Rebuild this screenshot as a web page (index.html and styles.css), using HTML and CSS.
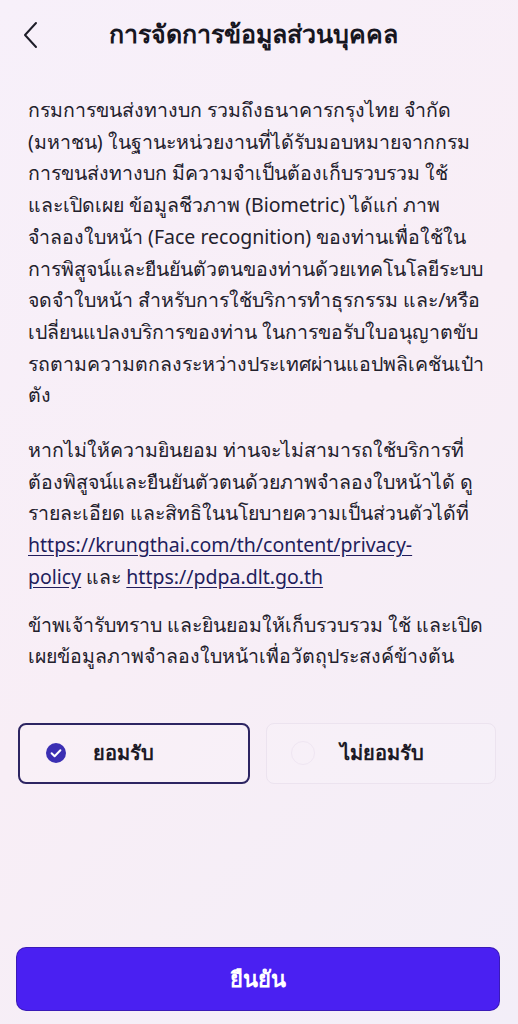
FILE: index.html
```html
<!DOCTYPE html>
<html lang="th">
<head>
<meta charset="utf-8">
<link rel="stylesheet" href="styles.css">
</head>
<body>
<div class="screen">
  <header class="header">
    <span class="back">
      <svg width="20" height="30" viewBox="0 0 20 30"><path d="M15 3 L4 15 L15 27" fill="none" stroke="#1d1d28" stroke-width="2" stroke-linecap="round" stroke-linejoin="round"/></svg>
    </span>
    <h1 class="title">การจัดการข้อมูลส่วนบุคคล</h1>
  </header>
  <main class="content">
    <p class="para p1">กรมการขนส่งทางบก รวมถึงธนาคารกรุงไทย จำกัด<br>(มหาชน) ในฐานะหน่วยงานที่ได้รับมอบหมายจากกรม<br>การขนส่งทางบก มีความจำเป็นต้องเก็บรวบรวม ใช้<br>และเปิดเผย ข้อมูลชีวภาพ (Biometric) ได้แก่ ภาพ<br>จำลองใบหน้า (Face recognition) ของท่านเพื่อใช้ใน<br>การพิสูจน์และยืนยันตัวตนของท่านด้วยเทคโนโลยีระบบ<br>จดจำใบหน้า สำหรับการใช้บริการทำธุรกรรม และ/หรือ<br>เปลี่ยนแปลงบริการของท่าน ในการขอรับใบอนุญาตขับ<br>รถตามความตกลงระหว่างประเทศผ่านแอปพลิเคชันเป๋า<br>ตัง</p>
    <p class="para p2">หากไม่ให้ความยินยอม ท่านจะไม่สามารถใช้บริการที่<br>ต้องพิสูจน์และยืนยันตัวตนด้วยภาพจำลองใบหน้าได้ ดู<br>รายละเอียด และสิทธิในนโยบายความเป็นส่วนตัวได้ที่<br><a class="link" href="#">https://krungthai.com/th/content/privacy-<br>policy</a> และ <a class="link" href="#">https://pdpa.dlt.go.th</a></p>
    <p class="para p3">ข้าพเจ้ารับทราบ และยินยอมให้เก็บรวบรวม ใช้ และเปิด<br>เผยข้อมูลภาพจำลองใบหน้าเพื่อวัตถุประสงค์ข้างต้น</p>
  </main>
  <div class="choices">
    <div class="choice selected">
      <span class="radio radio-on">
        <svg width="20" height="20" viewBox="0 0 20 20"><circle cx="10" cy="10" r="10" fill="#3b2fb3"/><path d="M5.6 10.3 L8.6 13.2 L14.4 7.2" fill="none" stroke="#fff" stroke-width="2" stroke-linecap="round" stroke-linejoin="round"/></svg>
      </span>
      <span class="choice-label">ยอมรับ</span>
    </div>
    <div class="choice">
      <span class="radio"><span class="radio-off"></span></span>
      <span class="choice-label">ไม่ยอมรับ</span>
    </div>
  </div>
  <div class="spacer"></div>
  <button class="confirm">ยืนยัน</button>
</div>
</body>
</html>
```

FILE: styles.css
```css
* { box-sizing: border-box; }
html, body {
  margin: 0;
  padding: 0;
  background: #f6eff8;
}
body {
  font-family: "Noto Sans", "DejaVu Sans", sans-serif;
  color: #1f1d28;
}
.screen {
  width: 518px;
  height: 1024px;
  display: flex;
  flex-direction: column;
  background: linear-gradient(135deg, #f7f0fa 0%, #f8eef6 50%, #f3eef8 100%);
}
.header {
  height: 68px;
  display: flex;
  align-items: center;
  position: relative;
  justify-content: center;
}
.back {
  position: absolute;
  left: 21px;
  top: 20px;
  display: flex;
}
.title {
  margin: 0;
  font-size: 25px;
  font-weight: 700;
  color: #17161f;
  transform: translateX(-6px);
}
.content {
  padding: 26px 0 0 28px;
}
.para {
  margin: 0;
  font-size: 19.5px;
  line-height: 31.7px;
  color: #23212c;
  white-space: nowrap;
}
.p1 { margin-bottom: 23px; }
.p2 { margin-bottom: 16px; }
.link {
  color: #221d5c;
  text-decoration: underline;
  text-underline-offset: 3px;
}
.choices {
  display: flex;
  gap: 16px;
  padding: 0 22px 0 18px;
  margin-top: 51px;
}
.choice {
  flex: 1;
  height: 61px;
  border-radius: 8px;
  border: 1.5px solid #ece3ef;
  display: flex;
  align-items: center;
  padding-left: 24px;
  background: rgba(255,255,255,0.15);
}
.choice.selected {
  border: 2px solid #2d2562;
}
.radio {
  width: 24px;
  height: 24px;
  display: flex;
  align-items: center;
  justify-content: center;
}
.radio-off {
  width: 24px;
  height: 24px;
  border-radius: 50%;
  border: 1.5px solid #efe6f2;
}
.choice-label {
  font-size: 20px;
  font-weight: 700;
  color: #1c1a26;
  margin-left: 25px;
}
.spacer { flex: 1; }
.confirm {
  margin: 0 19px 14px 17px;
  height: 62px;
  border: none;
  border-radius: 9px;
  background: #4a20f2;
  color: #ffffff;
  font-family: "Noto Sans", "DejaVu Sans", sans-serif;
  font-size: 22px;
  font-weight: 700;
  box-shadow: 0 0 0 1px #3a1ab8;
}
```
